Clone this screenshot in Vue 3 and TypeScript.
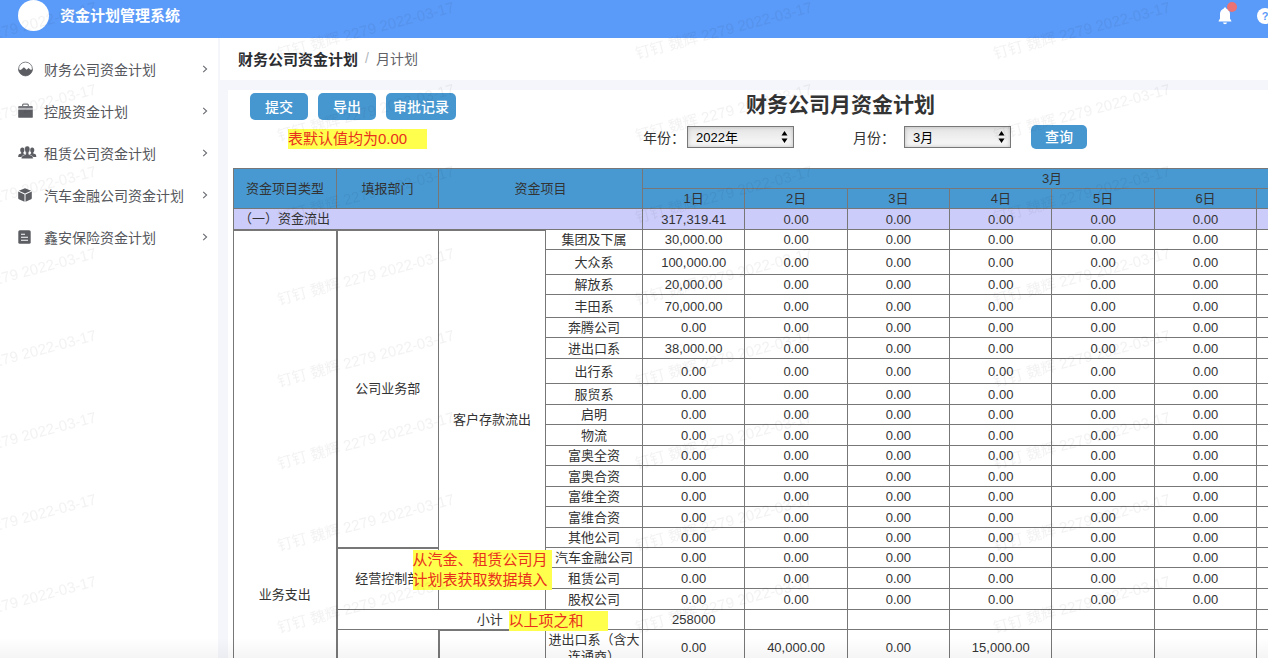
<script setup lang="ts">
import { ref } from 'vue'

interface MenuItem {
  icon: 'gauge' | 'briefcase' | 'people' | 'box' | 'document'
  label: string
}

interface PlanRow {
  name: string
  height: number
  first: string
}

const menu: MenuItem[] = [
  { icon: 'gauge', label: '财务公司资金计划' },
  { icon: 'briefcase', label: '控股资金计划' },
  { icon: 'people', label: '租赁公司资金计划' },
  { icon: 'box', label: '汽车金融公司资金计划' },
  { icon: 'document', label: '鑫安保险资金计划' },
]

const days: number[] = [1, 2, 3, 4, 5, 6, 7, 8]
const zero = '0.00'

const depositRows: PlanRow[] = [
  { name: '集团及下属', height: 20, first: '30,000.00' },
  { name: '大众系', height: 25, first: '100,000.00' },
  { name: '解放系', height: 20, first: '20,000.00' },
  { name: '丰田系', height: 23, first: '70,000.00' },
  { name: '奔腾公司', height: 20, first: zero },
  { name: '进出口系', height: 21, first: '38,000.00' },
  { name: '出行系', height: 25, first: zero },
  { name: '服贸系', height: 21, first: zero },
  { name: '启明', height: 20, first: zero },
  { name: '物流', height: 21, first: zero },
  { name: '富奥全资', height: 20, first: zero },
  { name: '富奥合资', height: 21, first: zero },
  { name: '富维全资', height: 20, first: zero },
  { name: '富维合资', height: 21, first: zero },
  { name: '其他公司', height: 20, first: zero },
  { name: '汽车金融公司', height: 20, first: zero },
  { name: '租赁公司', height: 21, first: zero },
  { name: '股权公司', height: 21, first: zero },
]

const controlStart = 15
const tradeRow: string[] = ['0.00', '40,000.00', '0.00', '15,000.00', '', '', '', '']

const year = ref('2022年')
const month = ref('3月')
</script>

<template>
  <div class="app">
    <header class="topbar">
      <span class="avatar"></span>
      <h1 class="brand">资金计划管理系统</h1>
      <div class="actions">
        <button class="icon-btn bell" type="button" aria-label="消息">
          <svg width="16" height="18" viewBox="0 0 16 18" fill="#fff">
            <path d="M8 0.6c-.8 0-1.3.5-1.3 1.2C4.300 2.400 3 4.500 3 7v4.600L1.600 14v.6h12.800V14L13 11.600V7c0-2.500-1.300-4.600-3.700-5.200C9.300 1.100 8.800.6 8 .6z" />
            <path d="M6 15.600h4c-.2 1.200-1 1.700-2 1.700s-1.800-.5-2-1.700z" />
          </svg>
          <span class="badge"></span>
        </button>
        <button class="icon-btn help" type="button" aria-label="帮助">?</button>
      </div>
    </header>

    <div class="body">
      <nav class="sidebar">
        <a v-for="item in menu" :key="item.label" class="menu-item" href="#">
          <svg class="menu-icon" width="19" height="16" viewBox="0 0 19 16">
            <g v-if="item.icon === 'gauge'">
              <circle cx="7.500" cy="8" r="6.900" fill="#fff" stroke="#85878c" stroke-width="1" />
              <path d="M.2 7.600A7.300 7.300 0 0 0 14.800 7.600C14 9 13 9.200 12 8.200L10.600 6.900 8.600 8.800 5.900 6.200 3.400 8.600C2.300 9.500 1 9 .2 7.600z" fill="#5b5d63" />
            </g>
            <g v-else-if="item.icon === 'briefcase'">
              <path d="M4.600 3.500V2.300C4.600 1.500 5 1.200 5.700 1.200h3.600c.7 0 1.100.3 1.100 1.100v1.200" fill="none" stroke="#7c7e83" stroke-width="1.200" />
              <path d="M1.300 3h12.400c.7 0 1.100.4 1.100 1.100v1.500H.2V4.100C.2 3.400.6 3 1.300 3z" fill="#77797e" />
              <path d="M.2 6.500h14.600v7.400c0 .6-.4.9-.9.9H1.100c-.5 0-.9-.3-.9-.9z" fill="#5b5d63" />
            </g>
            <g v-else-if="item.icon === 'people'" fill="#5b5d63">
              <path d="M4.300 2.500c1.500 0 2.200 1.100 2.100 2.500 0 1-.4 1.900-1 2.400v1.200l2 .8c-1.700.8-2.600 1.600-2.700 2.600H.2c0-1.900.4-2.500 1.400-2.900l1.600-.6V7.400c-.6-.5-1-1.400-1-2.400 0-1.400.700-2.500 2.100-2.500z" />
              <path d="M14.200 2.500c-1.500 0-2.200 1.100-2.100 2.500 0 1 .4 1.900 1 2.400v1.200l-2 .8c1.700.8 2.600 1.600 2.700 2.600h4.500c0-1.900-.4-2.500-1.400-2.900l-1.600-.6V7.400c.6-.5 1-1.400 1-2.400 0-1.400-.700-2.500-2.100-2.500z" />
              <path d="M9.250 1c1.900 0 2.800 1.400 2.700 3.200 0 1.300-.5 2.400-1.200 3.100v2l2.700 1.200c1.300.5 1.700 1.500 1.700 3.300H3.350c0-1.800.4-2.800 1.700-3.300l2.700-1.200v-2c-.7-.7-1.200-1.800-1.200-3.100C6.450 2.400 7.350 1 9.250 1z" stroke="#fff" stroke-width=".5" />
            </g>
            <g v-else-if="item.icon === 'box'" fill="#5b5d63">
              <path d="M7 1.200l6.200 2.600L7 6.600.8 3.800z" />
              <path d="M.2 4.600l6.300 2.900v7.300L.9 12.300c-.5-.2-.7-.5-.7-1z" />
              <path d="M13.800 4.600L7.500 7.500v7.300l5.600-2.500c.5-.2.7-.5.7-1z" />
            </g>
            <g v-else>
              <rect x=".3" y="1.200" width="12.400" height="13.600" rx="1.600" fill="#5b5d63" />
              <path d="M3 5.200h4M3 8.200h7M3 11.300h7" stroke="#fff" stroke-width="1.100" />
            </g>
          </svg>
          <span class="menu-label">{{ item.label }}</span>
          <svg class="chevron" width="6" height="8" viewBox="0 0 6 8">
            <path d="M1.200.8L4.600 4 1.200 7.200" fill="none" stroke="#6a6c72" stroke-width="1.100" />
          </svg>
        </a>
      </nav>

      <main class="main">
        <div class="crumbs">
          <strong>财务公司资金计划</strong>
          <span class="slash">/</span>
          <span class="current">月计划</span>
        </div>

        <section class="panel">
          <div class="toolbar">
            <div class="tools">
              <div class="buttons">
                <button class="btn" type="button">提交</button>
                <button class="btn" type="button">导出</button>
                <button class="btn" type="button">审批记录</button>
              </div>
              <p class="note">表默认值均为0.00</p>
            </div>
            <div class="query">
              <h2 class="title">财务公司月资金计划</h2>
              <form class="filters" @submit.prevent>
                <label for="year">年份：</label>
                <span class="picker">
                  <select id="year" v-model="year">
                    <option>2022年</option>
                  </select>
                  <svg width="7" height="12" viewBox="0 0 7 12"><path d="M3.500 0L6.500 4.600h-6zM3.500 12L6.500 7.400h-6z" /></svg>
                </span>
                <label class="month-label" for="month">月份：</label>
                <span class="picker">
                  <select id="month" v-model="month">
                    <option>3月</option>
                  </select>
                  <svg width="7" height="12" viewBox="0 0 7 12"><path d="M3.500 0L6.500 4.600h-6zM3.500 12L6.500 7.400h-6z" /></svg>
                </span>
                <button class="btn search" type="submit">查询</button>
              </form>
            </div>
          </div>

          <div class="table-wrap">
            <table class="plan">
              <colgroup>
                <col class="c-type" />
                <col class="c-dept" />
                <col class="c-group" />
                <col class="c-name" />
                <col v-for="d in days" :key="d" />
              </colgroup>
              <thead>
                <tr class="head-row">
                  <th rowspan="2">资金项目类型</th>
                  <th rowspan="2">填报部门</th>
                  <th rowspan="2" colspan="2">资金项目</th>
                  <th :colspan="days.length">3月</th>
                </tr>
                <tr class="head-row">
                  <th v-for="d in days" :key="d">{{ d }}日</th>
                </tr>
              </thead>
              <tbody>
                <tr class="sum-row">
                  <td class="sum-name" colspan="4">（一）资金流出</td>
                  <td v-for="d in days" :key="d">{{ d === 1 ? '317,319.41' : zero }}</td>
                </tr>
                <tr v-for="(row, i) in depositRows" :key="row.name" :style="{ height: row.height + 'px' }">
                  <td v-if="i === 0" class="type-cell" :rowspan="depositRows.length + 3">业务支出</td>
                  <td v-if="i === 0" class="dept-cell" :rowspan="controlStart">公司业务部</td>
                  <td v-if="i === controlStart" class="anchor" :rowspan="depositRows.length - controlStart">
                    经营控制部
                    <p class="note over source-note">从汽金、租赁公司月计划表获取数据填入</p>
                  </td>
                  <td v-if="i === 0" class="group-cell" :rowspan="depositRows.length">客户存款流出</td>
                  <td>{{ row.name }}</td>
                  <td v-for="d in days" :key="d">{{ d === 1 ? row.first : zero }}</td>
                </tr>
                <tr class="subtotal-row">
                  <td class="anchor" colspan="3">
                    小计
                    <p class="note over total-note">以上项之和</p>
                  </td>
                  <td v-for="d in days" :key="d">{{ d === 1 ? '258000' : '' }}</td>
                </tr>
                <tr class="trade-row">
                  <td rowspan="2"></td>
                  <td class="trade-group" rowspan="2"></td>
                  <td>进出口系（含大连通商）</td>
                  <td v-for="(v, i) in tradeRow" :key="i">{{ v }}</td>
                </tr>
                <tr class="tail-row">
                  <td></td>
                  <td v-for="d in days" :key="d"></td>
                </tr>
              </tbody>
            </table>
          </div>
        </section>
      </main>
    </div>

    <svg class="watermark" aria-hidden="true">
      <defs>
        <pattern id="mark" x="266" y="234" width="358" height="82" patternUnits="userSpaceOnUse">
          <text transform="translate(13 71) rotate(-15)">钉钉 魏辉 2279 2022-03-17</text>
        </pattern>
      </defs>
      <rect width="100%" height="100%" fill="url(#mark)" />
    </svg>
    <div class="fade"></div>
  </div>
</template>

<style>
body {
  margin: 0;
}
</style>

<style scoped>
.app {
  position: relative;
  display: flex;
  flex-direction: column;
  height: 100vh;
  overflow: hidden;
  background: #f4f6fb;
  color: #333;
  font-family: "Liberation Sans", "Noto Sans CJK SC", sans-serif;
  font-size: 13px;
}

.topbar {
  display: flex;
  align-items: center;
  flex: none;
  height: 31px;
  padding: 0 0 7px 18px;
  background: #5a9af8;
}

.avatar {
  width: 31px;
  height: 31px;
  border-radius: 50%;
  background: #fff;
}

.brand {
  margin: 0 auto 0 11px;
  color: #fff;
  font-size: 15px;
  line-height: 20px;
}

.actions {
  display: flex;
  align-items: center;
  gap: 24px;
  margin-right: -5px;
}

.icon-btn {
  position: relative;
  display: block;
  width: 16px;
  padding: 0;
  border: 0;
  background: none;
}

.icon-btn svg {
  display: block;
}

.badge {
  position: absolute;
  top: -5px;
  right: -4px;
  width: 10px;
  height: 10px;
  border-radius: 50%;
  background: #ea7272;
}

.help {
  height: 16px;
  border-radius: 50%;
  background: #fff;
  color: #5a9af8;
  font: bold 11px/16px "Liberation Sans", sans-serif;
}

.body {
  display: grid;
  grid-template-columns: 218px minmax(0, 1fr);
  flex: 1;
  min-height: 0;
}

.sidebar {
  padding-top: 10px;
  background: #fff;
}

.menu-item {
  display: flex;
  align-items: center;
  height: 42px;
  padding: 0 10px 0 18px;
  color: #55575c;
  font-size: 14px;
  text-decoration: none;
}

.menu-icon {
  margin-right: 7px;
}

.menu-label {
  flex: 1;
}

.main {
  overflow: hidden;
  padding-left: 2px;
}

.crumbs {
  display: flex;
  align-items: center;
  box-sizing: border-box;
  gap: 7px;
  height: 42px;
  padding: 0 0 2px 18px;
  background: #fff;
  font-size: 14px;
}

.crumbs strong {
  color: #2b2d31;
  font-size: 15px;
}

.slash {
  color: #b4b8c0;
}

.current {
  color: #606266;
}

.panel {
  margin: 10px 0 0 8px;
  padding-left: 5px;
  background: #fff;
}

.toolbar {
  display: grid;
  grid-template-columns: 410px minmax(0, 1fr);
  height: 78px;
}

.buttons {
  display: flex;
  gap: 10px;
  padding: 3px 0 0 17px;
}

.btn {
  height: 27px;
  padding: 0 15px;
  border: 0;
  border-radius: 5px;
  background: #4697d0;
  color: #fff;
  font: 500 14px/20px "Liberation Sans", "Noto Sans CJK SC", sans-serif;
}

.btn:last-child {
  padding: 0 7px;
}

.note {
  box-sizing: border-box;
  margin: 0;
  background: #ffff4d;
  color: #e8301c;
  font-size: 15px;
  line-height: 20px;
  text-align: left;
}

.tools .note {
  width: 139px;
  margin: 9px 0 0 55px;
}

.title {
  margin: 0;
  padding: 0 0 0 103px;
  font-size: 21px;
  line-height: 30px;
}

.filters {
  display: flex;
  align-items: center;
  height: 34px;
  font-size: 14px;
}

.filters label {
  width: 44px;
}

.filters .month-label {
  width: 51px;
  margin-left: 59px;
}

.picker {
  display: grid;
  align-items: center;
  width: 107px;
}

.picker select,
.picker svg {
  grid-area: 1 / 1;
}

.picker svg {
  justify-self: end;
  margin-right: 6px;
  pointer-events: none;
}

.picker select {
  width: 100%;
  height: 22px;
  padding: 0 8px;
  border: 1px solid #777;
  border-radius: 0;
  appearance: none;
  background: linear-gradient(#e4e4e4, #fafafa);
  box-shadow: inset 0 0 4px #bbb;
  color: #000;
  font: 13px "Liberation Sans", "Noto Sans CJK SC", sans-serif;
}

.filters .search {
  height: 24px;
  margin-left: 20px;
  padding: 0 14px;
}

.table-wrap {
  overflow-x: auto;
}

.plan {
  width: 1229px;
  border-collapse: collapse;
  table-layout: fixed;
  line-height: 17px;
}

.c-type {
  width: 103px;
}

.c-dept {
  width: 102px;
}

.c-group {
  width: 107px;
}

.c-name {
  width: 97px;
}

.plan th,
.plan td {
  padding: 0;
  border: 1px solid #777;
  font-weight: normal;
  text-align: center;
}

.plan th {
  background: #4899d2;
}

.head-row,
.subtotal-row {
  height: 20px;
}

.sum-row {
  height: 21px;
  background: #ccccfb;
}

.plan .sum-name {
  padding-left: 5px;
  text-align: left;
}

.plan .type-cell {
  border-top-width: 2px;
  border-right-width: 2px;
}

.plan .dept-cell {
  border-top-width: 2px;
  border-bottom-width: 2px;
}

.plan .group-cell {
  border-top-width: 2px;
}

.plan .trade-group {
  border-top-width: 2px;
  border-left-width: 2px;
}

.trade-row {
  height: 36px;
}

.tail-row {
  height: 294px;
}

.anchor {
  position: relative;
}

.over {
  position: absolute;
  top: 1px;
}

.source-note {
  left: 75px;
  width: 139px;
}

.total-note {
  left: 171px;
  width: 99px;
}

.watermark {
  position: absolute;
  inset: 0;
  width: 100%;
  height: 100%;
  pointer-events: none;
}

.watermark text {
  fill: #000;
  fill-opacity: 0.05;
  font-size: 15px;
}

.fade {
  position: absolute;
  inset: auto 0 0;
  height: 20px;
  background: linear-gradient(rgba(0, 0, 0, 0), rgba(0, 0, 0, 0.04));
  pointer-events: none;
}
</style>
